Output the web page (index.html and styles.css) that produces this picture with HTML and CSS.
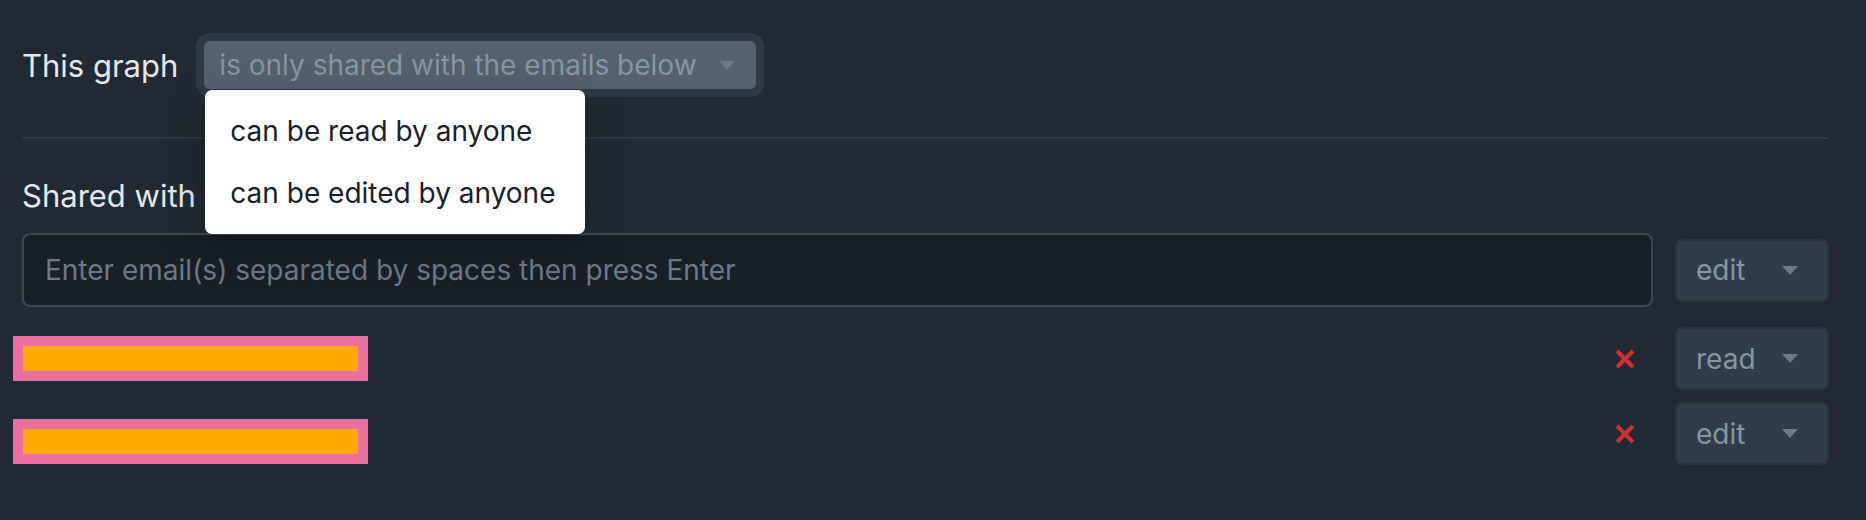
FILE: index.html
```html
<!DOCTYPE html>
<html lang="en">
<head>
    <meta charset="UTF-8">
    <meta name="viewport" content="width=device-width, initial-scale=1.0">
    <title>Share graph</title>
    <link rel="stylesheet" href="styles.css">
</head>
<body>
    <div class="panel">
        <div class="visibility">
            <span class="label">This graph</span>
            <div class="select-wrap">
                <div class="select select-public">
                    <span>is only shared with the emails below</span>
                    <svg class="caret" width="16" height="9" viewBox="0 0 16 9"><polygon points="0,0 16,0 8,9"/></svg>
                </div>
                <ul class="menu">
                    <li>can be read by anyone</li>
                    <li>can be edited by anyone</li>
                </ul>
            </div>
        </div>

        <hr class="divider">

        <h2 class="section-title">Shared with</h2>

        <div class="invite">
            <input type="text" class="email-input" placeholder="Enter email(s) separated by spaces then press Enter">
            <div class="select role">
                <span>edit</span>
                <svg class="caret" width="16" height="9" viewBox="0 0 16 9"><polygon points="0,0 16,0 8,9"/></svg>
            </div>
        </div>

        <ul class="members">
            <li class="member">
                <span class="redacted"><span></span></span>
                <button class="remove" aria-label="Remove">
                    <svg width="20" height="20" viewBox="0 0 20 20"><path d="M2 2 L18 18 M18 2 L2 18"/></svg>
                </button>
                <div class="select role">
                    <span>read</span>
                    <svg class="caret" width="16" height="9" viewBox="0 0 16 9"><polygon points="0,0 16,0 8,9"/></svg>
                </div>
            </li>
            <li class="member">
                <span class="redacted low"><span></span></span>
                <button class="remove" aria-label="Remove">
                    <svg width="20" height="20" viewBox="0 0 20 20"><path d="M2 2 L18 18 M18 2 L2 18"/></svg>
                </button>
                <div class="select role">
                    <span>edit</span>
                    <svg class="caret" width="16" height="9" viewBox="0 0 16 9"><polygon points="0,0 16,0 8,9"/></svg>
                </div>
            </li>
        </ul>
    </div>
</body>
</html>
```

FILE: styles.css
```css
body {
  margin: 0;
  font-family: Inter, "Noto Sans", sans-serif;
  font-size: 28px;
  background-color: #212a34;
  color: #e2e8f0;
}

.panel {
  padding: 41px 37px 0 22px;
}

.visibility {
  display: flex;
  align-items: center;
  gap: 26px;
  height: 48px;
}

.label {
  font-size: 31px;
}

.select-wrap {
  position: relative;
}

.select {
  display: flex;
  align-items: center;
  justify-content: space-between;
  box-sizing: border-box;
  color: #8796a3;
}

.select-public {
  width: 552px;
  height: 48px;
  padding: 0 21px 0 15px;
  background-color: #536270;
  border-radius: 6px;
  box-shadow: 0 0 0 8px #2c3a47;
}

.select-public .caret {
  fill: #6c7b88;
}

.menu {
  position: absolute;
  top: 49px;
  left: 1px;
  width: 380px;
  margin: 0;
  padding: 10px 0;
  list-style: none;
  background-color: #fff;
  color: #1a202c;
  border-radius: 7px;
  box-shadow: 0 12px 40px rgba(0, 0, 0, 0.25);
  z-index: 2;
}

.menu li {
  height: 62px;
  line-height: 62px;
  padding: 0 25px;
}

.divider {
  margin: 48px 0 0;
  border: none;
  height: 2px;
  background-color: #2c3946;
}

.section-title {
  margin: 40px 0 20px;
  font-size: 31px;
  font-weight: 400;
  line-height: 34px;
}

.invite {
  display: flex;
  align-items: center;
  gap: 22px;
}

.email-input {
  flex: 1;
  height: 74px;
  box-sizing: border-box;
  padding: 0 21px;
  font-family: inherit;
  font-size: 28px;
  color: #e2e8f0;
  background-color: #181f27;
  border: 2px solid #3a4754;
  border-radius: 8px;
  outline: none;
}

.email-input::placeholder {
  color: #6b7a88;
}

.role {
  width: 154px;
  height: 63px;
  padding: 0 29px 0 19px;
  background-color: #2e3d4b;
  border: 2px solid #29353f;
  border-radius: 8px;
}

.role .caret {
  fill: #6c7b88;
}

.members {
  margin: 20px 0 0;
  padding: 0;
  list-style: none;
  display: flex;
  flex-direction: column;
  gap: 12px;
}

.member {
  display: flex;
  align-items: center;
}

.redacted {
  display: block;
  width: 355px;
  height: 45px;
  margin-left: -9px;
  padding: 10px;
  box-sizing: border-box;
  background-color: #ec6fa0;
}

.redacted span {
  display: block;
  height: 100%;
  background-color: #ffa800;
}

.redacted.low {
  margin-top: 16px;
}

.remove {
  margin-left: auto;
  margin-right: 40px;
  padding: 0;
  border: none;
  background: none;
  display: flex;
}

.remove path {
  stroke: #d12f2f;
  stroke-width: 4;
}
```
